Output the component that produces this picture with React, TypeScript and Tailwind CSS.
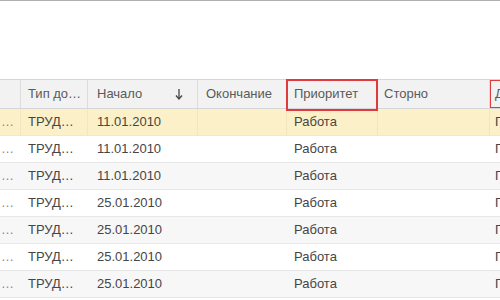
import React from "react";

interface Row {
  type: string;
  start: string;
  end: string;
  priority: string;
  storno: string;
  next: string;
}

const rows: Row[] = [
  { type: "ТРУД…", start: "11.01.2010", end: "", priority: "Работа", storno: "", next: "П" },
  { type: "ТРУД…", start: "11.01.2010", end: "", priority: "Работа", storno: "", next: "П" },
  { type: "ТРУД…", start: "11.01.2010", end: "", priority: "Работа", storno: "", next: "П" },
  { type: "ТРУД…", start: "25.01.2010", end: "", priority: "Работа", storno: "", next: "П" },
  { type: "ТРУД…", start: "25.01.2010", end: "", priority: "Работа", storno: "", next: "П" },
  { type: "ТРУД…", start: "25.01.2010", end: "", priority: "Работа", storno: "", next: "П" },
  { type: "ТРУД…", start: "25.01.2010", end: "", priority: "Работа", storno: "", next: "П" },
];

const cols = "grid grid-cols-[21px_67px_110px_89px_91px_112px_1fr]";

function SortArrow() {
  return (
    <svg width="8" height="12" viewBox="0 0 8 12" className="text-[#444]">
      <path d="M4 1 V10.5" stroke="currentColor" strokeWidth="1.3" fill="none" />
      <path d="M1 7.5 L4 11 L7 7.5" stroke="currentColor" strokeWidth="1.3" fill="none" />
    </svg>
  );
}

export default function App() {
  return (
    <div className="w-[500px] h-[300px] overflow-hidden bg-white border-t border-[#b0b0b0] font-['Liberation_Sans',Arial,sans-serif] text-[13px]">
      <div className="h-[78px]" />

      {/* header */}
      <div className={`${cols} h-[30px] bg-[#f2f2f2] border-y border-[#d6d6d6] text-[#5a5a5a]`}>
        <div className="border-r border-[#dcdcdc]" />
        <div className="flex items-center pl-[7px] border-r border-[#dcdcdc] whitespace-nowrap overflow-hidden">
          Тип до…
        </div>
        <div className="flex items-center justify-between pl-[9px] pr-[14px] border-r border-[#dcdcdc]">
          <span>Начало</span>
          <SortArrow />
        </div>
        <div className="flex items-center pl-[8px] border-r border-[#dcdcdc]">Окончание</div>
        <div className="relative flex items-center pl-[7px] border-r border-[#dcdcdc]">
          <span>Приоритет</span>
          <div className="absolute left-[-1px] top-[-1px] w-[92px] h-[32px] border-2 border-[#e0393e]" />
        </div>
        <div className="flex items-center pl-[6px] border-r border-[#dcdcdc]">Сторно</div>
        <div className="relative flex items-center pl-[5px] whitespace-nowrap overflow-hidden">
          <span>Д</span>
          <div className="absolute left-[-1px] top-[-1px] w-[20px] h-[30px] border-2 border-[#e0393e]" />
        </div>
      </div>

      {/* rows */}
      {rows.map((r, i) => {
        const bg = i === 0 ? "bg-[#fcf0c9]" : i % 2 === 0 ? "bg-[#f7f7f7]" : "bg-white";
        const sep = i === 0 ? "border-r border-[#f3e6bd]" : "";
        return (
          <div key={i} className={`${cols} h-[27px] border-b border-[#e8e8e8] text-[#454545] ${bg}`}>
            <div className={`flex items-center pl-[1px] text-[#888] ${sep}`}>…</div>
            <div className={`flex items-center pl-[7px] whitespace-nowrap overflow-hidden ${sep}`}>{r.type}</div>
            <div className={`flex items-center pl-[9px] ${sep}`}>{r.start}</div>
            <div className={`flex items-center pl-[8px] ${sep}`}>{r.end}</div>
            <div className={`flex items-center pl-[7px] ${sep}`}>{r.priority}</div>
            <div className={`flex items-center pl-[6px] ${sep}`}>{r.storno}</div>
            <div className="flex items-center pl-[5px] overflow-hidden">{r.next}</div>
          </div>
        );
      })}
    </div>
  );
}
